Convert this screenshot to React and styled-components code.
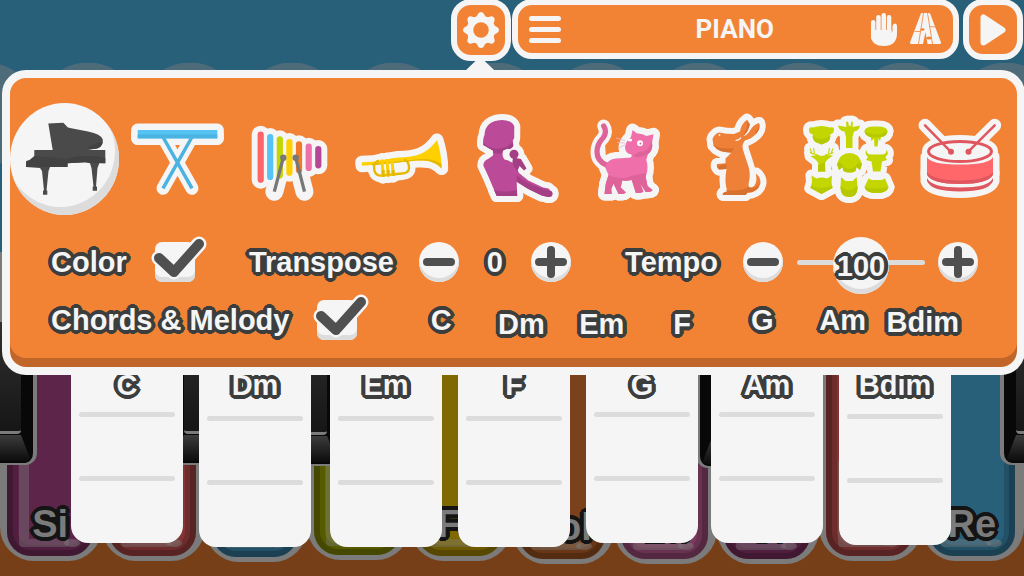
import React, { useState } from 'react';
import styled, { createGlobalStyle, css } from 'styled-components';

const WHITE = '#f5f5f5';
const SHADE = '#dcdcdc';
const ORANGE = '#f28335';
const DARK = '#3c3e3e';

const GlobalStyle = createGlobalStyle`
  * {
    box-sizing: border-box;
  }

  body {
    margin: 0;
    font-family: 'Liberation Sans', Arial, sans-serif;
    font-weight: 700;
  }

  button {
    margin: 0;
    padding: 0;
    border: 0;
    background: none;
    font: inherit;
    cursor: pointer;
  }
`;

const Page = styled.div`
  display: grid;
  grid-template: minmax(100vh, auto) / minmax(0, 1fr);
  overflow: hidden;
  background: #285f79;

  & > * {
    grid-area: 1 / 1;
  }
`;

const Scallops = styled.div`
  margin-top: 63px;
  background: radial-gradient(circle at 51px 51px, #4e6b7a 51px, transparent 52px) 37px 0 / 102px 300px repeat-x;
`;

// solid rounded outline around bold text
const RING = [
  [3, 0], [3, 1], [3, 2], [2, 3], [1, 3], [0, 3], [0, 4], [4, 0],
];

const outline = (color) =>
  RING.flatMap(([x, y]) => [[x, y], [-x, y], [x, -y], [-x, -y]])
    .map(([x, y]) => `${x}px ${y}px 0 ${color}`)
    .join(', ');

const outlined = css`
  color: ${WHITE};
  font-size: 29px;
  line-height: 40px;
  white-space: nowrap;
  text-shadow: ${outline(DARK)};
`;

/* ---------- keyboard ---------- */

const Keyboard = styled.div`
  display: grid;
  grid-template-columns: repeat(10, 1fr);
  isolation: isolate;
  margin-top: 252px;
  padding-bottom: 12px;
  background: #773f18;
`;

const KeySlot = styled.div`
  position: relative;
  display: grid;
  margin-bottom: ${({ $lift }) => $lift}px;
`;

const WhiteKey = styled.button`
  display: grid;
  padding: 0 9px 5px 7px;
  border-radius: 0 0 34px 34px;
  background: #7b7b7b;
`;

const KeyFace = styled.span`
  position: relative;
  display: flex;
  align-items: flex-end;
  justify-content: center;
  padding-bottom: 12px;
  border-radius: 0 0 24px 24px;
  background: ${({ $color }) => $color};
  box-shadow: inset 0 0 0 6px rgba(0, 0, 0, 0.2), inset 0 0 0 11px rgba(0, 0, 0, 0.15);

  &::before,
  &::after {
    content: '';
    position: absolute;
    bottom: 9px;
  }

  &::before {
    left: 12px;
    width: 40px;
    height: 80px;
    border: solid rgba(123, 123, 123, 0.4);
    border-width: 0 0 8px 10px;
    border-radius: 4px;
  }

  &::after {
    left: 57px;
    width: 16px;
    height: 8px;
    border-radius: 50%;
    background: rgba(123, 123, 123, 0.5);
  }
`;

const KeyName = styled.span`
  ${outlined}
  z-index: 1;
  color: #7b7b7b;
  font-size: 38px;
  text-shadow: ${outline('#141414')};
`;

const SharpKey = styled.button`
  position: absolute;
  z-index: 2;
  top: 70px;
  bottom: 96px;
  ${({ $side, $shift }) => `${$side}: ${-30 - $shift}px;`}
  display: flex;
  flex-direction: column;
  width: 60px;
  padding-bottom: 2px;
  border: solid #7b7b7b;
  border-width: 0 4px 2px;
  border-radius: 0 0 12px 12px;
  background: #080808;
`;

const SharpFace = styled.span`
  flex: 1;
  margin: 0 12px;
  border-bottom: 3px solid #7b7b7b;
  border-radius: 0 0 4px 4px;
  background: linear-gradient(#303030, #161616);
`;

const SharpFoot = styled.span`
  height: 26px;
  margin: 1px 3px 0;
  background: linear-gradient(#3c3c3c, #0c0c0c);
  clip-path: polygon(9px 0, calc(100% - 9px) 0, 100% 90%, 94% 100%, 6% 100%, 0 90%);
`;

/* ---------- chord cards ---------- */

const ChordCards = styled.div`
  z-index: 1;
  display: grid;
  grid-template-columns: 128fr 131fr 128fr 128fr 125fr 128fr 112fr;
  align-items: start;
  align-self: start;
  padding: 365px 73px 0 71px;
`;

const ChordCard = styled.div`
  display: flex;
  flex-direction: column;
  width: 112px;
  padding: 0 8px 62px;
  border-radius: 0 0 17px 17px;
  background: ${WHITE};
`;

const CardName = styled.span`
  ${outlined}
  margin-bottom: ${({ $drop }) => 7 + $drop}px;
  text-align: center;
`;

const CardLine = styled.span`
  height: 5px;
  border-radius: 3px;
  background: ${SHADE};

  & + & {
    margin-top: 59px;
  }
`;

/* ---------- header ---------- */

const Front = styled.div`
  z-index: 2;
  align-self: start;
`;

const Header = styled.header`
  display: flex;
  align-items: flex-start;
  gap: 1px;
  margin-top: -1px;
  padding: 0 1px 9px 44%;
`;

const HeaderButton = styled.button`
  display: grid;
  place-items: center;
  flex: none;
  width: 60px;
  height: ${({ $tall }) => ($tall ? 62 : 61)}px;
  border: 6px solid ${WHITE};
  border-radius: 20px;
  background: ${ORANGE};
`;

const TitleBar = styled.div`
  display: grid;
  grid-template-columns: 1fr auto 1fr;
  align-items: center;
  flex: 1;
  height: 60px;
  margin-right: 3px;
  padding: 0 12px 0 11px;
  border: 6px solid ${WHITE};
  border-radius: 20px;
  background: ${ORANGE};
`;

const Title = styled.h1`
  margin: 0;
  color: ${WHITE};
  font-family: Roboto, sans-serif;
  font-size: 26px;
  line-height: 32px;
`;

const MenuButton = styled.button`
  display: flex;
  flex-direction: column;
  justify-self: start;
  gap: 6px;

  span {
    width: 32px;
    height: 5px;
    border-radius: 3px;
    background: ${WHITE};
  }
`;

const TitleActions = styled.div`
  display: flex;
  justify-content: flex-end;
  gap: 13px;

  button {
    display: grid;
  }
`;

/* ---------- settings panel ---------- */

const Panel = styled.section`
  position: relative;
  margin: 0 -1px 0 2px;
  padding: 25px 0 27px;
  border: 8px solid ${WHITE};
  border-radius: 24px;
  background: ${ORANGE};
  box-shadow: inset 0 -9px 0 #c0662a;

  &::before {
    content: '';
    position: absolute;
    top: -19px;
    left: calc(44% + 12px);
    width: 30px;
    height: 12px;
    background: ${WHITE};
    clip-path: polygon(50% -20%, 100% 100%, 0 100%);
  }
`;

const Instruments = styled.div`
  display: grid;
  grid-template-columns: repeat(9, 1fr);
  margin-bottom: 27px;
`;

const InstrumentButton = styled.button`
  width: 109px;
  height: 112px;
  border-radius: 50%;

  ${({ $selected }) =>
    $selected &&
    css`
      background: ${WHITE};
      box-shadow: inset -4px -8px 0 ${SHADE};
    `}

  svg {
    display: block;
    overflow: visible;
  }
`;

const Halo = styled.g`
  & * {
    fill: ${WHITE};
    stroke: ${WHITE};
    stroke-width: ${({ $width }) => $width}px;
    stroke-linecap: round;
    stroke-linejoin: round;
  }
`;

const Row = styled.div`
  display: flex;
  align-items: center;
  justify-content: space-between;
  padding: 0 39px 0 41px;

  & + & {
    margin-top: 18px;
    padding-right: 54px;
  }
`;

const Group = styled.div`
  display: flex;
  align-items: center;
`;

const Caption = styled.label`
  ${outlined}
  margin-right: ${({ $gap }) => $gap}px;
`;

const CheckWrap = styled.span`
  position: relative;
  display: grid;

  svg {
    position: absolute;
    top: 0;
    left: 0;
    overflow: visible;
    pointer-events: none;
  }
`;

const CheckInput = styled.input`
  appearance: none;
  width: 40px;
  height: 40px;
  margin: 0;
  border-radius: 7px;
  background: ${WHITE};
  box-shadow: inset 0 -5px 0 ${SHADE};
`;

const RoundButton = styled.button`
  display: grid;
  place-items: center;
  width: 40px;
  height: 40px;
  border-radius: 50%;
  background: ${WHITE};
  box-shadow: inset 0 -4px 0 ${SHADE};
`;

const Value = styled.output`
  ${outlined}
  width: 72px;
  text-align: center;
`;

const SliderWrap = styled.span`
  position: relative;
  display: grid;
  margin: 0 13px 0 14px;

  output {
    position: absolute;
    inset: 4px 0 auto;
    width: auto;
    pointer-events: none;
  }
`;

const Slider = styled.input`
  appearance: none;
  width: 128px;
  height: 40px;
  margin: 0;
  background: none;

  &::-webkit-slider-runnable-track {
    height: 5px;
    border-radius: 3px;
    background: ${SHADE};
  }

  &::-webkit-slider-thumb {
    appearance: none;
    width: 56px;
    height: 57px;
    margin-top: -23px;
    border-radius: 50%;
    background: ${WHITE};
    box-shadow: inset 0 -5px 0 ${SHADE};
  }
`;

const ChordPicker = styled.div`
  display: grid;
  grid-template-columns: repeat(7, 1fr);
  flex: 0 0 562px;
`;

const ChordButton = styled.button`
  ${outlined}
  height: 40px;
  padding-top: ${({ $drop }) => $drop}px;
`;

const KEYS = [
  { name: 'Si', color: '#5e254b', lift: 3, lead: true },
  { name: 'Do', color: '#833434', lift: 3, sharp: -7 },
  { name: 'Re', color: '#28607a', lift: 2, sharp: 6 },
  { name: 'Mi', color: '#666c00', lift: 4 },
  { name: 'Fa', color: '#806900', lift: 3, sharp: -9 },
  { name: 'Sol', color: '#7b411a', lift: 0, sharp: 3 },
  { name: 'La', color: '#7c3b5e', lift: 0, sharp: 9 },
  { name: 'Si', color: '#5e254b', lift: 0 },
  { name: 'Do', color: '#833434', lift: 3, sharp: -7 },
  { name: 'Re', color: '#28607a', lift: 3, sharp: 6 },
];

const CHORDS = [
  { name: 'C', drop: 0 },
  { name: 'Dm', drop: 4 },
  { name: 'Em', drop: 4 },
  { name: 'F', drop: 4 },
  { name: 'G', drop: 0 },
  { name: 'Am', drop: 0 },
  { name: 'Bdim', drop: 2 },
];

const Piano = () => (
  <g fill="#4a4a4a">
    <path d="M48.3 123.6L63.3 122.7L66 125.5Q67 127.5 70 128L88 131.5Q101 134 102.8 139.5Q103.500 146.500 97 148.500L87.500 150H105.300V163.300H99.300L97.500 168L96 186.500H97V190.700H92.700V186.500H93.500L91.500 168L90 163.300L85 162.300L67.500 163.300V167H50L48.500 171L46.500 190.500H47.300V194.700H43V190.500H44L42 171L40 168L26 167V161.500Q27 160 34.300 159.500V150H52.700Z" />
    <path d="M34.300 156L66 159Q85 153 105.300 158V163.300L85 162.300L67.500 163.300V167H26V163Z" fill="#424242" />
    <path d="M87 149.500Q89 144 102.500 142Q102 147 97 148.500Z" fill="#424242" />
  </g>
);

const Synth = () => (
  <g fill="none" stroke="#4bb3e0" strokeWidth="3.500">
    <path d="M163 137L192 188.300M192 137L163 188.300" />
    <rect x="137.700" y="130" width="79.600" height="8.400" fill="#55c3f4" stroke="none" />
    <rect x="137.700" y="134.500" width="79.600" height="3.900" fill="#4bb3e0" stroke="none" />
  </g>
);

const BARS = [
  [260.7, 134.7, 179.7, '#ff6469'],
  [270.2, 137, 177, '#55c3f4'],
  [279.8, 139.3, 175.3, '#c3d600'],
  [289.4, 142, 172.7, '#ffcf00'],
  [299, 144.3, 170.3, '#f07a28'],
  [308.7, 146.7, 168, '#ee6fa9'],
  [318.3, 149, 165.3, '#b44896'],
];

const Xylophone = () => (
  <g strokeLinecap="round" strokeWidth="6.200">
    {BARS.map(([x, top, bottom, color]) => (
      <path key={x} d={`M${x} ${top}V${bottom}`} stroke={color} />
    ))}
    <g stroke="#777" strokeWidth="3.300" strokeLinecap="butt">
      <path d="M283.300 157.700L274.300 191.700M295.700 157.700L304.500 191.700" />
    </g>
    <circle cx="283.300" cy="157.700" r="3.200" fill="#777" />
    <circle cx="295.700" cy="157.700" r="3.200" fill="#777" />
  </g>
);

const Trumpet = () => (
  <g fill="none">
    <path d="M361.700 162.300L372 161.800L398 157.500C415 157 426 155 437 140Q441.500 154 441.700 168.500C434 160.500 425 160 412 161L372 165L362 165.800Z" fill="#ffd000" />
    <path d="M372 163.500L412 160C426 158 434 159 441.500 164V168.500C434 160.500 425 160 412 161L372 165.500Z" fill="#e6b800" />
    <path d="M379 160.500Q374.500 161.500 374 167Q374 175 380 175.700L402 173.500Q409 173 409 168Q409 161 404 159.500" stroke="#e6b800" strokeWidth="2.300" />
    <path d="M382 159.500L383.200 177M387 159L388.200 176.500M392 158.500L393.200 176" stroke="#ffd000" strokeWidth="3" />
    <path d="M383.200 170V177M388.200 170V176.500M393.200 170V176" stroke="#e6b800" strokeWidth="3" />
  </g>
);

const Singer = () => (
  <g fill="#bb4a98">
    <path d="M501.700 120Q512 120 514.300 126.500L514.200 138L512.700 141L513.300 145.500Q512 149.500 507 148.800L503 150.500Q501.500 156 504.500 159.500Q512 161 515.500 165.500L519 173L528.300 180.500L543 187.500L548.500 188.500L552.700 193Q553 197.500 548 197L541.700 195.500L528.300 189L516.700 181.700L517.200 196H496.700L488.500 176.700L483.300 165.500Q483.500 160.500 488 159L493 155.500Q493.500 152 492.700 150.500L483.300 145Q482.500 139 484.500 135Q485 121 501.700 120Z" />
    <path d="M483.300 143Q492 151 503 148Q510 146 513.500 141L512.700 141L513.300 145.500Q512 149.500 507 148.800L503 150.500L502 154L493 153V150.500L483.300 145ZM494 190Q505 193 516.900 190L517.200 196H496.700ZM517 175Q525 184 552 191.500Q553 197.500 548 197L541.700 195.500L528.300 189L516.700 181.700Z" fill="#a43f86" />
    <circle cx="514" cy="154.300" r="4.500" fill="#a43f86" />
    <path d="M516 158L521 159L526.500 168.500L524 170.500L519.500 166L517.500 171L513.500 166Q511.500 162 513 158Z" fill="#a43f86" />
  </g>
);

const Cat = () => (
  <g fill="#ee6fa9">
    <path d="M607.500 165Q598 161 598 152Q598 144 604 138Q608.500 132 604.700 126" fill="none" stroke="#dd6399" strokeWidth="5.300" strokeLinecap="round" />
    <path d="M633.600 130L638 133.500Q643 133 647.500 136L654.500 134.300L653 143Q654.500 150 649 154L647.300 160Q650 168 646.700 176.700L648.500 186L653.500 190Q653 192 646.700 192L641.500 184L640 187.500L644.500 191.500Q643 193.500 636.700 192.700L632.800 180Q627 181.500 623.300 180.300L621.700 187.500L627 192.500Q625 194.500 619.500 194L614.500 183.500L612.300 189L612.700 194H605.500L606.700 184L609.500 175L606 166.700Q609 159 617 158.600L630 157.800Q633.500 157.500 632.500 154.500Q626 153.500 626 147Q627 141 632 137Z" />
    <path d="M609.500 175Q622 181 632 176L646.700 173V177L648.500 186L653.500 190Q653 192 646.700 192L641.500 184L644.500 191.500Q643 193.500 636.700 192.700L632.800 180Q627 181.500 623.300 180.300L621.700 187.500L627 192.500Q625 194.500 619.500 194L614.500 183.500L612.300 189L612.700 194H605.500L606.700 184ZM653 143Q654.500 150 649 154Q641 159 634 156L640 152Q650 152 652 142Z" fill="#dd6399" />
  </g>
);

const CatFace = () => (
  <g>
    <circle cx="641" cy="143.300" r="3" fill="#fff" />
    <circle cx="641.500" cy="143.600" r="1" fill="#dd6399" />
    <ellipse cx="631" cy="140" rx="2.200" ry="1.600" fill="#fff" />
    <path d="M617 138L626 140.500M618 142.500L626 143M619 148L626 145" fill="none" stroke="#efb4cf" strokeWidth="0.800" />
  </g>
);

const Kangaroo = () => (
  <g fill="#ee8137">
    <path d="M713.500 139Q716 133 720.500 132.500Q727 134 735 134L741 131.500Q742 124 748 119.700Q750.500 122 749.500 127Q748 132 744.500 136Q748 136 752 129Q755 124.500 760 123Q761.500 129 757 134Q752 139 746 140.500Q742.500 144 744 150L748.300 163Q752.500 173 749.700 183Q749 188 752 188Q759 186 757 173.500Q762.500 178 761.300 184Q759 192.500 748.500 192.800L746.500 195H724Q722.500 192.500 728.500 191.500Q725 183 727.500 169L720 169.500Q717 167 718 164L726.500 163.300V158.500L732.500 152.500Q720 153 714.500 145.500Z" />
    <path d="M714.500 145Q722 150 735 148L732.500 152.500Q720 153 714.500 145.500ZM718 166L727.500 164V169L720 169.500ZM726.500 190Q740 192 750 187Q757 190 761 182Q759 192.500 748.500 192.800L746.500 195H724Q722.500 192.500 728.500 191.500ZM746 132Q749 127 748 121L751 124Q750 131 744.500 136ZM756 132Q760 130 760 123Q762 129 757 134Z" fill="#d87030" />
    <circle cx="720.500" cy="135" r="0.900" fill={WHITE} />
    <path d="M736.500 140.500Q740 140.500 742 137.500" fill="none" stroke={WHITE} strokeWidth="1.200" />
  </g>
);

const Animals = () => (
  <g fill="#c3d600">
    <path d="M810 130Q810 126.500 814 127.500Q822.500 124.500 831 127.500Q835.500 126.500 835 130Q834.500 134 831.500 134Q831 142 826 143L822.500 144.500L819 143Q814 142 813.500 134Q810 134 810 130Z" />
    <path d="M849 121.500L850 126H851.500L852.500 121.500L854 122L853.500 127L861 125.500Q860 131 855 131.500L853.500 137V148H847V137L845.500 131.500Q840 131 839 125.500L847.500 127L847 122Z" />
    <path d="M865.500 131Q866 126 876.500 126.500Q888 126 888.500 131Q888 136.500 882 137L881 141L879.500 138.500L878.500 146.500H875.500L875 138.500L872.500 141L871.500 137Q866 136 865.500 131Z" />
    <path d="M819 155L822.700 156L827 155L834 155.500L828 160L826 163L826.500 171.500H819L819.300 163L817 160L811.500 156Z" />
    <path d="M811 148.500L813 153.500L819 155M814.500 148L815.500 153.500M834 148.500L832 153.500L826 155M830.500 148L829.500 153.500M811 152.500L814 154M834.500 152.500L831 154" fill="none" stroke="#c3d600" strokeWidth="1.100" />
    <path d="M850.500 153Q860 153 863 164L861 170L857.500 167L856.500 171Q851 174 844.500 171L843.500 167L840 170L838 164Q841 153 850.500 153Z" />
    <path d="M867.500 150Q867.500 154.500 872 154.500H884Q888 153.500 887 150Q891 153 886.500 157L888 160L883 161.500L881.500 171.500H874L872.500 161.500L867 160L869 157Q865 153.500 867.500 150Z" />
    <path d="M812.500 175.500L817.500 178.500Q822.500 176.500 828 178.500L833 175.500L832.500 182L833.500 188L827 191.500L822.500 194L818 191.500L811.500 188L813 182Z" />
    <path d="M842 177L846.500 181H853.500L857.700 177L858.500 188Q858 197 850 197Q841.500 197 841.500 188Z" />
    <path d="M869.500 178.500L873 180H882.500L886 178.500L889.500 187Q888 193 877.500 193Q867 193 865.500 187Z" />
    <path d="M813.500 136Q822 142 831.500 136Q831 142 826 143L822.500 144.500L819 143Q814 142 813.500 136ZM865.500 131Q877 138 888.500 131Q888 136.500 882 137H872Q866 136 865.500 131ZM819 165L826 162V171.500H819ZM838 164Q841 160 844 166Q850 172 857 166Q860 160 863 164L861 170L857.500 167L856.500 171Q851 174 844.500 171L843.500 167L840 170ZM812 186Q822 190 833 186L833.500 188L822.500 194L811.500 188ZM841.500 186Q850 194 858.500 186Q859 197 850 197Q841.500 197 841.500 186ZM865.500 187Q877 190 889.500 187Q888 193 877.500 193Q867 193 865.500 187Z" fill="#b6c800" />
  </g>
);

const Drum = () => (
  <g fill="none" stroke="#e0565e" strokeWidth="3">
    <path d="M928 157Q931 164.500 961 164.500Q991 164.500 994 157V174Q989 184 961 184Q933 184 928 174Z" fill="#ff676b" stroke="none" />
    <path d="M928 172Q935 180.500 961 180.500Q987 180.500 994 172V175Q989 184 961 184Q933 184 928 175Z" fill="#e0565e" stroke="none" />
    <path d="M928 178Q932 187.500 961 187.500Q990 187.500 994 178V181Q990 191.500 961 191.500Q932 191.500 928 181Z" fill="#e0565e" stroke="none" />
    <ellipse cx="961" cy="151.500" rx="31.500" ry="10" />
    <path d="M926 125.300L951.700 151.700M995.700 125.300L969.300 151.700" strokeWidth="2.500" strokeLinecap="round" />
    <circle cx="952" cy="151.700" r="1.500" />
    <circle cx="969.500" cy="151.700" r="1.500" />
  </g>
);

const INSTRUMENTS = [
  { name: 'Piano', Shape: Piano, halo: 0 },
  { name: 'Synth', Shape: Synth, halo: 13 },
  { name: 'Xylophone', Shape: Xylophone, halo: 18 },
  { name: 'Trumpet', Shape: Trumpet, halo: 13 },
  { name: 'Voice', Shape: Singer, halo: 12 },
  { name: 'Cat', Shape: Cat, halo: 13, Detail: CatFace },
  { name: 'Kangaroo', Shape: Kangaroo, halo: 12 },
  { name: 'Animals', Shape: Animals, halo: 12 },
  { name: 'Drum', Shape: Drum, halo: 13 },
];

const GearIcon = () => (
  <svg width="38" height="38" viewBox="-19 -19 38 38">
    <circle r="11" fill="none" stroke={WHITE} strokeWidth="6.500" />
    {[0, 45, 90, 135, 180, 225, 270, 315].map((angle) => (
      <path
        key={angle}
        d="M-6.500 -11.500Q-4.200 -13 -3.300 -15.500Q-2.500 -18 0 -18Q2.500 -18 3.300 -15.500Q4.200 -13 6.500 -11.500Z"
        fill={WHITE}
        transform={`rotate(${angle})`}
      />
    ))}
  </svg>
);

const HandIcon = () => (
  <svg width="26" height="33" viewBox="0 0 26 33" fill={WHITE}>
    <rect x="0" y="7" width="4.400" height="20" rx="2.200" />
    <rect x="5.200" y="2" width="4.500" height="24" rx="2.200" />
    <rect x="10.500" y="0" width="4.500" height="24" rx="2.200" />
    <rect x="15.800" y="2" width="4.500" height="24" rx="2.200" />
    <path d="M0 17H20.500V20L21.500 18V13Q22 10.500 24 10.500Q26 10.500 26 13V21Q25.500 33 13 33Q0.500 33 0 23Z" />
  </svg>
);

const RoadIcon = () => (
  <svg width="31" height="31" viewBox="0 0 31 31">
    <path d="M12 0H19Q20 0 20.300 1L31 29.500Q31 31 30 31H1Q0 31 0 29.500L10.700 1Q11 0 12 0Z" fill={WHITE} />
    <g fill="none" stroke={ORANGE} strokeWidth="0.800">
      <path d="M13.500 0L8.500 31M17.500 0L22.500 31M4.500 18.500H10.500M19.500 13.500L25 14" />
    </g>
    <path d="M15.500 19L17.500 31H13Z" fill={ORANGE} />
    <ellipse cx="12.500" cy="16.500" rx="2" ry="1.200" fill={ORANGE} />
    <ellipse cx="19" cy="25" rx="2.700" ry="1.500" fill={ORANGE} />
  </svg>
);

const PlayIcon = () => (
  <svg width="28" height="34" viewBox="0 0 28 34">
    <path d="M4.500 4.500V29.500L23.500 17Z" fill={WHITE} stroke={WHITE} strokeWidth="6" strokeLinejoin="round" />
  </svg>
);

const SignIcon = ({ plus }) => (
  <svg width="32" height="32" viewBox="0 0 32 32" stroke="#505050" strokeWidth="8" strokeLinecap="round">
    <path d={plus ? 'M4 16H28M16 4V28' : 'M4 16H28'} />
  </svg>
);

const Checkbox = ({ id, label }) => {
  const [checked, setChecked] = useState(true);
  const tick = 'M4 16L19 30L44 2';

  return (
    <Group>
      <Caption htmlFor={id} $gap={28}>{label}</Caption>
      <CheckWrap>
        <CheckInput id={id} type="checkbox" checked={checked} onChange={() => setChecked(!checked)} />
        {checked && (
          <svg width="40" height="40" fill="none" strokeLinecap="round" strokeLinejoin="round">
            <path d={tick} stroke={WHITE} strokeWidth="15" />
            <path d={tick} stroke="#505050" strokeWidth="10" />
          </svg>
        )}
      </CheckWrap>
    </Group>
  );
};

const App = () => {
  const [instrument, setInstrument] = useState(0);
  const [transpose, setTranspose] = useState(0);
  const [tempo, setTempo] = useState(100);

  return (
    <Page>
      <GlobalStyle />
      <Scallops />

      <Keyboard>
        {KEYS.map((key, i) => (
          <KeySlot key={i} $lift={key.lift}>
            <WhiteKey>
              <KeyFace $color={key.color}>
                <KeyName>{key.name}</KeyName>
              </KeyFace>
            </WhiteKey>
            {key.lead && (
              <SharpKey $side="left" $shift={-7} aria-label="La sharp">
                <SharpFace />
                <SharpFoot />
              </SharpKey>
            )}
            {key.sharp !== undefined && (
              <SharpKey $side="right" $shift={key.sharp} aria-label={`${key.name} sharp`}>
                <SharpFace />
                <SharpFoot />
              </SharpKey>
            )}
          </KeySlot>
        ))}
      </Keyboard>

      <ChordCards>
        {CHORDS.map(({ name, drop }) => (
          <ChordCard key={name}>
            <CardName $drop={drop}>{name}</CardName>
            <CardLine />
            <CardLine />
          </ChordCard>
        ))}
      </ChordCards>

      <Front>
        <Header>
          <HeaderButton $tall aria-label="Settings">
            <GearIcon />
          </HeaderButton>
          <TitleBar>
            <MenuButton aria-label="Menu">
              <span />
              <span />
              <span />
            </MenuButton>
            <Title>PIANO</Title>
            <TitleActions>
              <button aria-label="Hands">
                <HandIcon />
              </button>
              <button aria-label="Falling notes">
                <RoadIcon />
              </button>
            </TitleActions>
          </TitleBar>
          <HeaderButton aria-label="Play">
            <PlayIcon />
          </HeaderButton>
        </Header>

        <Panel>
          <Instruments>
            {INSTRUMENTS.map(({ name, Shape, halo, Detail }, i) => (
              <InstrumentButton
                key={name}
                aria-label={name}
                $selected={i === instrument}
                onClick={() => setInstrument(i)}
              >
                <svg width="112" height="112" viewBox={`${10 + i * 112} 103 112 112`}>
                  {halo > 0 && (
                    <Halo $width={halo}>
                      <Shape />
                    </Halo>
                  )}
                  <Shape />
                  {Detail && <Detail />}
                </svg>
              </InstrumentButton>
            ))}
          </Instruments>

          <Row>
            <Checkbox id="color" label="Color" />
            <Group>
              <Caption as="span" $gap={25}>Transpose</Caption>
              <RoundButton aria-label="Transpose down" onClick={() => setTranspose(transpose - 1)}>
                <SignIcon />
              </RoundButton>
              <Value>{transpose}</Value>
              <RoundButton aria-label="Transpose up" onClick={() => setTranspose(transpose + 1)}>
                <SignIcon plus />
              </RoundButton>
            </Group>
            <Group>
              <Caption htmlFor="tempo" $gap={25}>Tempo</Caption>
              <RoundButton aria-label="Slower" onClick={() => setTempo(tempo - 1)}>
                <SignIcon />
              </RoundButton>
              <SliderWrap>
                <Slider
                  id="tempo"
                  type="range"
                  min="40"
                  max="160"
                  value={tempo}
                  onChange={(e) => setTempo(Number(e.target.value))}
                />
                <Value htmlFor="tempo">{tempo}</Value>
              </SliderWrap>
              <RoundButton aria-label="Faster" onClick={() => setTempo(tempo + 1)}>
                <SignIcon plus />
              </RoundButton>
            </Group>
          </Row>

          <Row>
            <Checkbox id="chords" label="Chords & Melody" />
            <ChordPicker>
              {CHORDS.map(({ name, drop }) => (
                <ChordButton key={name} $drop={drop}>{name}</ChordButton>
              ))}
            </ChordPicker>
          </Row>
        </Panel>
      </Front>
    </Page>
  );
};

export default App;
